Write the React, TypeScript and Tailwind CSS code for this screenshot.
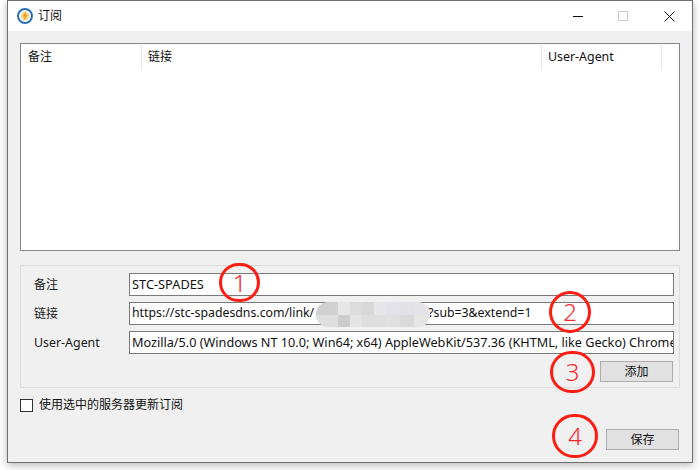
const font = '"Noto Sans","Noto Sans CJK SC",sans-serif';

function Annotation({ n, className }: { n: string; className: string }) {
  return (
    <div className={`absolute flex items-center justify-center rounded-full border-[3px] border-[#fb1c12] text-[#f8262a] text-[24px] leading-none font-light ${className}`}>
      {n}
    </div>
  );
}

const mosaic = [
  "#d0d0d0","#e6e6e6","#dcdcdc","#d8d8d8","#e6e6ea","#e2e2e8","#e2e2e6","#e4e4e6",
  "#dedede","#cccccc","#e4e4e4","#dedede","#dedede","#e0e0e0","#dadada","#e6e6e6",
];

function Field({ label, value, labelClass, valueClass, children }: { label: string; value: string; labelClass?: string; valueClass: string; children?: React.ReactNode }) {
  return (
    <div className="flex items-center h-[23px]">
      <div className={`w-[108px] pl-[13px] text-[#1a1a1a] ${labelClass ?? "text-[12px]"}`}>{label}</div>
      <div className={`relative w-[545px] h-[23px] bg-white border border-[#7a7a7a] overflow-hidden flex items-center pl-[2px] text-[#111] whitespace-nowrap ${valueClass}`}>
        <span>{value}</span>
        {children}
      </div>
    </div>
  );
}

export default function App() {
  return (
    <div className="relative h-[470px] w-[700px] bg-white overflow-hidden" style={{ fontFamily: font }}>
      <div className="ml-[7px] w-[686px] h-[463px] border border-t-0 border-[#6f6f6f] bg-[#f0f0f0] shadow-[0_2px_8px_rgba(0,0,0,0.3)] flex flex-col">
        <div className="h-[31px] bg-white border-t border-[#6f6f6f] flex items-center shrink-0">
          <svg width="16" height="16" viewBox="0 0 16 16" className="ml-[9px]">
            <circle cx="8" cy="8" r="7" fill="none" stroke="#2a6fb0" strokeWidth="2" />
            <circle cx="8" cy="8" r="5.6" fill="#f3f6fa" />
            <circle cx="8" cy="8" r="4" fill="#f9d98a" />
            <path d="M9.4 2.8 5.4 8.6h2.2L6.4 13.2 10.8 7H8.4Z" fill="#ee9a14" />
          </svg>
          <span className="ml-[5px] text-[12px] text-[#111]">订阅</span>
          <div className="ml-auto flex items-center">
            <svg width="10" height="10" viewBox="0 0 10 10" className="mr-[35px]">
              <path d="M0 5.5h10" stroke="#111" strokeWidth="1" />
            </svg>
            <svg width="10" height="10" viewBox="0 0 10 10" className="mr-[36px]">
              <rect x="0.5" y="0.5" width="9" height="9" fill="none" stroke="#cccccc" />
            </svg>
            <svg width="11" height="11" viewBox="0 0 11 11" className="mr-[17px]">
              <path d="M0.5 0.5 10.5 10.5M10.5 0.5 0.5 10.5" stroke="#111" strokeWidth="1" />
            </svg>
          </div>
        </div>

        <div className="mt-[12px] ml-[12px] w-[660px] h-[208px] shrink-0 bg-white border border-[#828790]">
          <div className="flex h-[25px] text-[12px] text-[#111] mt-[1px]">
            <div className="w-[121px] pl-[7px] border-r border-[#e5e5e5] leading-[24px]">备注</div>
            <div className="w-[400px] pl-[6px] border-r border-[#e5e5e5] leading-[24px]">链接</div>
            <div className="w-[120px] pl-[6px] border-r border-[#e5e5e5] leading-[24px] text-[12.4px]">User-Agent</div>
          </div>
        </div>

        <div className="mt-[14px] ml-[12px] w-[660px] h-[123px] shrink-0 border border-[#dcdcdc] pt-[7px] flex flex-col gap-[6px]">
          <Field label="备注" value="STC-SPADES" valueClass="text-[12.8px]" />
          <Field label="链接" value="https://stc-spadesdns.com/link/" valueClass="text-[12.3px]">
            <span className="ml-[114px]">?sub=3&amp;extend=1</span>
          </Field>
          <Field label="User-Agent" labelClass="text-[12.4px] pt-[1px]" valueClass="text-[12.67px]" value="Mozilla/5.0 (Windows NT 10.0; Win64; x64) AppleWebKit/537.36 (KHTML, like Gecko) Chrome" />
          <div className="flex justify-end pr-[6px] mt-[1px]">
            <button className="w-[73px] h-[21px] bg-[#e1e1e1] border border-[#adadad] text-[12px] text-[#111] leading-none">添加</button>
          </div>
        </div>

        <div className="mt-[10px] ml-[12px] flex items-center h-[14px] shrink-0">
          <div className="w-[13px] h-[13px] bg-white border border-[#333]" />
          <span className="ml-[6px] text-[12px] text-[#111]">使用选中的服务器更新订阅</span>
        </div>

        <div className="flex justify-end mt-[17px] mr-[13px]">
          <button className="w-[73px] h-[21px] bg-[#e1e1e1] border border-[#adadad] text-[12px] text-[#111] leading-none">保存</button>
        </div>
      </div>

      <div className="absolute left-[316px] top-[302px] w-[114px] h-[25px] rounded-[12px] overflow-hidden grid grid-cols-[22px_12px_12px_12px_12px_14px_14px_16px] grid-rows-2">
        {mosaic.map((c, i) => (
          <div key={i} style={{ backgroundColor: c }} />
        ))}
      </div>

      <Annotation n="1" className="left-[219px] top-[263px] w-[41px] h-[39px]" />
      <Annotation n="2" className="left-[549px] top-[291px] w-[42px] h-[42px]" />
      <Annotation n="3" className="left-[550px] top-[351px] w-[45px] h-[42px]" />
      <Annotation n="4" className="left-[552px] top-[414px] w-[46px] h-[44px]" />
    </div>
  );
}
